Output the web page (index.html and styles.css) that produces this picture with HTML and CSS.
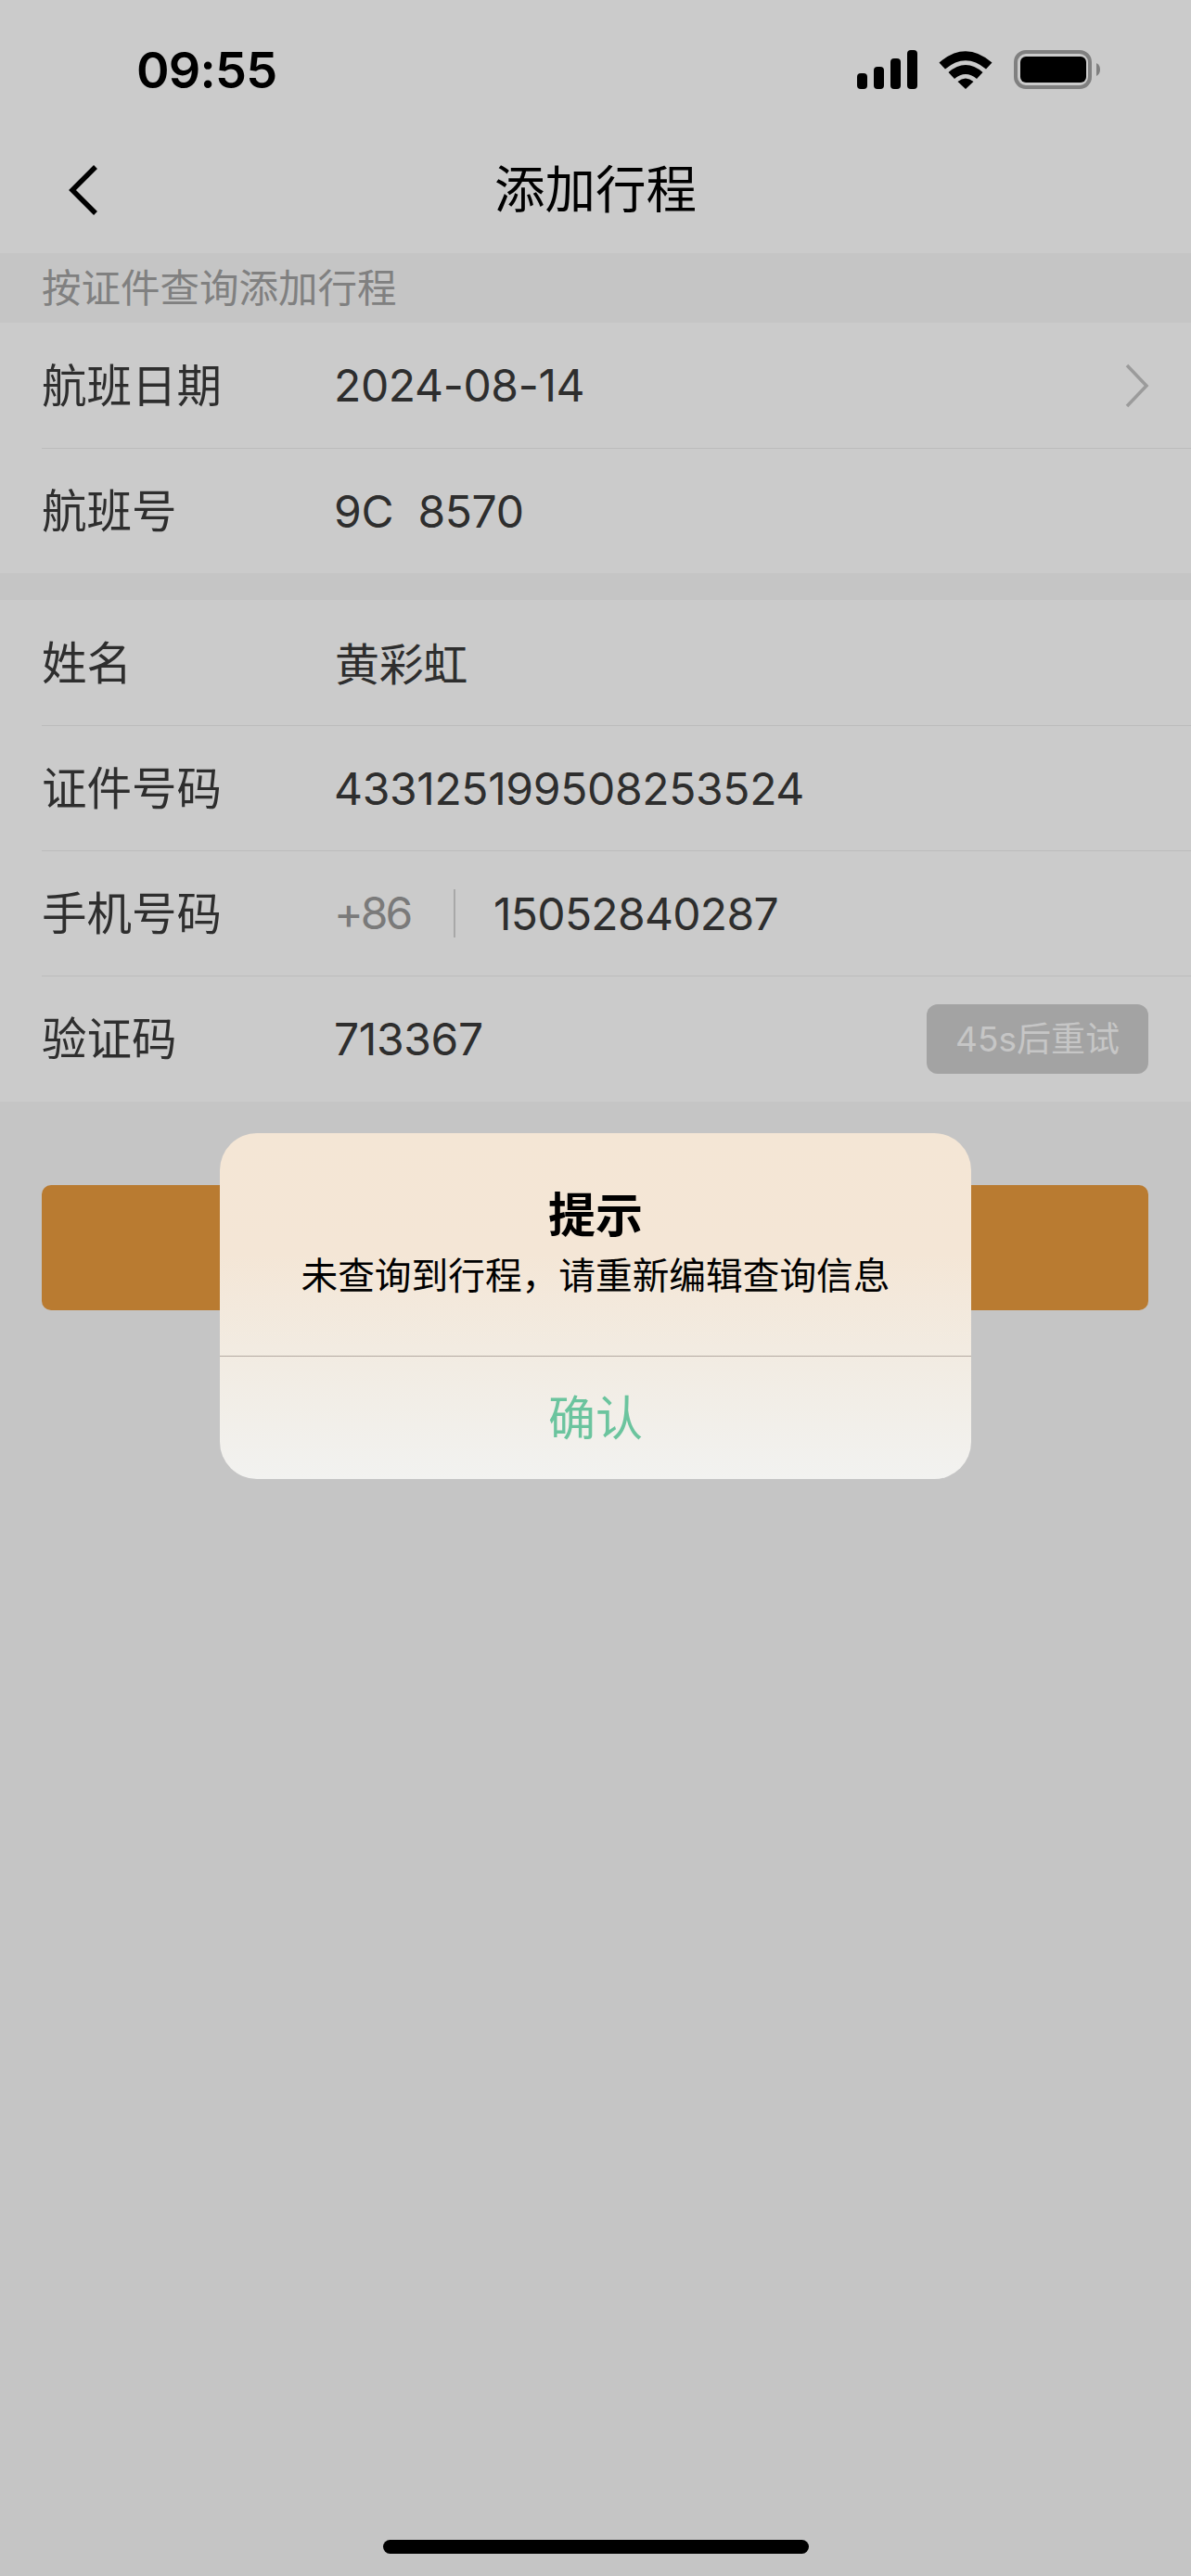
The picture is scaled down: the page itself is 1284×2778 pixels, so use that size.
FILE: index.html
```html
<!DOCTYPE html>
<html lang="zh-CN">
<head>
    <meta charset="UTF-8">
    <meta name="viewport" content="width=device-width, initial-scale=1.0">
    <title>添加行程</title>
    <link rel="stylesheet" href="styles.css">
</head>
<body>
    <div class="page">
        <div class="status-bar">
            <span class="time">09:55</span>
            <div class="status-icons">
                <svg class="signal" width="65" height="42" viewBox="0 0 65 42">
                    <rect x="0" y="25" width="11" height="17" rx="4"/>
                    <rect x="18" y="18" width="11" height="24" rx="4"/>
                    <rect x="36" y="9" width="11" height="33" rx="4"/>
                    <rect x="54" y="0" width="11" height="42" rx="4"/>
                </svg>
                <svg class="wifi" width="58" height="42" viewBox="0 0 58 42">
                    <path d="M0.5 13.5 Q29 -11 57.5 13.5 L51 20.5 Q29 2 7 20.5 Z"/>
                    <path d="M10.5 24 Q29 8 47.5 24 L41 31 Q29 21 17 31 Z"/>
                    <path d="M20.5 34 Q29 27 37.5 34 L29 42 Z"/>
                </svg>
                <svg class="battery" width="93" height="42" viewBox="0 0 93 42">
                    <rect x="2" y="2" width="80" height="38" rx="11" fill="none" stroke="#808080" stroke-width="4"/>
                    <rect x="7" y="7" width="71" height="28" rx="6"/>
                    <path d="M89 14 Q93 16 93 21 Q93 26 89 28 Z" fill="#808080"/>
                </svg>
            </div>
        </div>

        <div class="nav-bar">
            <svg class="back" width="36" height="56" viewBox="0 0 36 56">
                <path d="M31 3 L6 28 L31 53" fill="none" stroke="#000" stroke-width="5.5"/>
            </svg>
            <h1 class="nav-title">添加行程</h1>
        </div>

        <div class="section-title">按证件查询添加行程</div>

        <div class="group">
            <div class="row">
                <span class="label">航班日期</span>
                <span class="value">2024-08-14</span>
                <svg class="chevron" width="26" height="48" viewBox="0 0 26 48">
                    <path d="M2 2 L23 24 L2 46" fill="none" stroke="#9b9b9b" stroke-width="3.5"/>
                </svg>
            </div>
            <div class="row">
                <span class="label">航班号</span>
                <span class="value">9C&nbsp;&nbsp;8570</span>
            </div>
        </div>

        <div class="group group-person">
            <div class="row">
                <span class="label">姓名</span>
                <span class="value value-name">黄彩虹</span>
            </div>
            <div class="row">
                <span class="label">证件号码</span>
                <span class="value">433125199508253524</span>
            </div>
            <div class="row">
                <span class="label">手机号码</span>
                <span class="area-code">+86</span>
                <span class="value value-phone">15052840287</span>
            </div>
            <div class="row">
                <span class="label">验证码</span>
                <span class="value">713367</span>
                <span class="retry">45s后重试</span>
            </div>
        </div>

        <div class="submit"></div>

        <div class="home-bar"></div>

        <div class="dialog">
            <div class="dialog-body">
                <div class="dialog-title">提示</div>
                <div class="dialog-text">未查询到行程，请重新编辑查询信息</div>
            </div>
            <div class="dialog-btn">确认</div>
        </div>
    </div>
</body>
</html>
```

FILE: styles.css
```css
* {
    box-sizing: border-box;
}

body {
    margin: 0;
    background: #c5c5c5;
    font-family: Inter, "Noto Sans CJK SC", sans-serif;
    color: #2e2e2e;
}

.page {
    position: relative;
    display: flex;
    flex-direction: column;
    width: 1284px;
    height: 2778px;
    overflow: hidden;
}

.status-bar {
    display: flex;
    justify-content: space-between;
    align-items: center;
    height: 150px;
    padding: 0 98px 0 147px;
    background: #cbcbcb;
}

.time {
    font-size: 54px;
    font-weight: 600;
    letter-spacing: -0.8px;
    color: #000;
}

.status-icons {
    display: flex;
    align-items: center;
    gap: 23px;
}

.status-icons svg {
    display: block;
}

.nav-bar {
    position: relative;
    display: flex;
    justify-content: center;
    height: 123px;
    background: #cbcbcb;
}

.back {
    position: absolute;
    left: 72px;
    top: 27px;
}

.nav-title {
    margin: 0;
    font-size: 54.5px;
    font-weight: 400;
    line-height: 108px;
    color: #000;
}

.section-title {
    height: 75px;
    padding-left: 45px;
    font-size: 42.5px;
    line-height: 75px;
    color: #808080;
    background: #c5c5c5;
}

.group {
    margin-bottom: 29px;
    padding-left: 45px;
    background: #cbcbcb;
}

.group-person {
    margin-bottom: 0;
    padding-bottom: 1px;
}

.row {
    display: flex;
    align-items: center;
    height: 135px;
    padding-right: 46px;
    border-top: 1px solid #bcbcbc;
    font-size: 48px;
}

.row:first-child {
    border-top: 0;
}

.label {
    flex: none;
    width: 315px;
    padding-bottom: 6px;
    font-size: 48.5px;
}

.value {
    flex: 1;
    letter-spacing: -0.35px;
}

.value-name {
    padding: 0 0 3px 1px;
}

.value-phone {
    letter-spacing: -0.7px;
}

.chevron {
    flex: none;
    margin-right: -1px;
}

.area-code {
    flex: none;
    width: 172px;
    height: 52px;
    line-height: 52px;
    letter-spacing: -3px;
    color: #7a7a7a;
    background: linear-gradient(#a8a8a8, #a8a8a8) 129px 0 / 2px 100% no-repeat;
}

.retry {
    flex: none;
    width: 239px;
    height: 75px;
    border-radius: 12px;
    font-size: 37px;
    line-height: 75px;
    text-align: center;
    color: #c6c6c6;
    background: #a3a3a3;
}

.submit {
    height: 135px;
    margin: 90px 46px 0 45px;
    border-radius: 10px;
    background: #b97b31;
}

.home-bar {
    width: 459px;
    height: 15px;
    margin: auto auto 24px;
    border-radius: 8px;
    background: #000;
}

.dialog {
    position: absolute;
    left: 237px;
    top: 1222px;
    width: 810px;
    height: 373px;
    display: flex;
    flex-direction: column;
    border-radius: 40px;
    overflow: hidden;
    background: linear-gradient(#f4e6d5 0%, #f4e6d6 35%, #f2ebe1 62%, #f2f2f0 100%);
    text-align: center;
    color: #000;
}

.dialog-body {
    flex: none;
    height: 241px;
    padding-top: 54px;
    border-bottom: 1px solid #b3aaa2;
}

.dialog-title {
    font-size: 51px;
    font-weight: 700;
    line-height: 70px;
}

.dialog-text {
    padding-top: 2px;
    font-size: 39.7px;
    line-height: 56px;
}

.dialog-btn {
    flex: 1;
    font-size: 51px;
    line-height: 134px;
    color: #6bc49e;
}
```
